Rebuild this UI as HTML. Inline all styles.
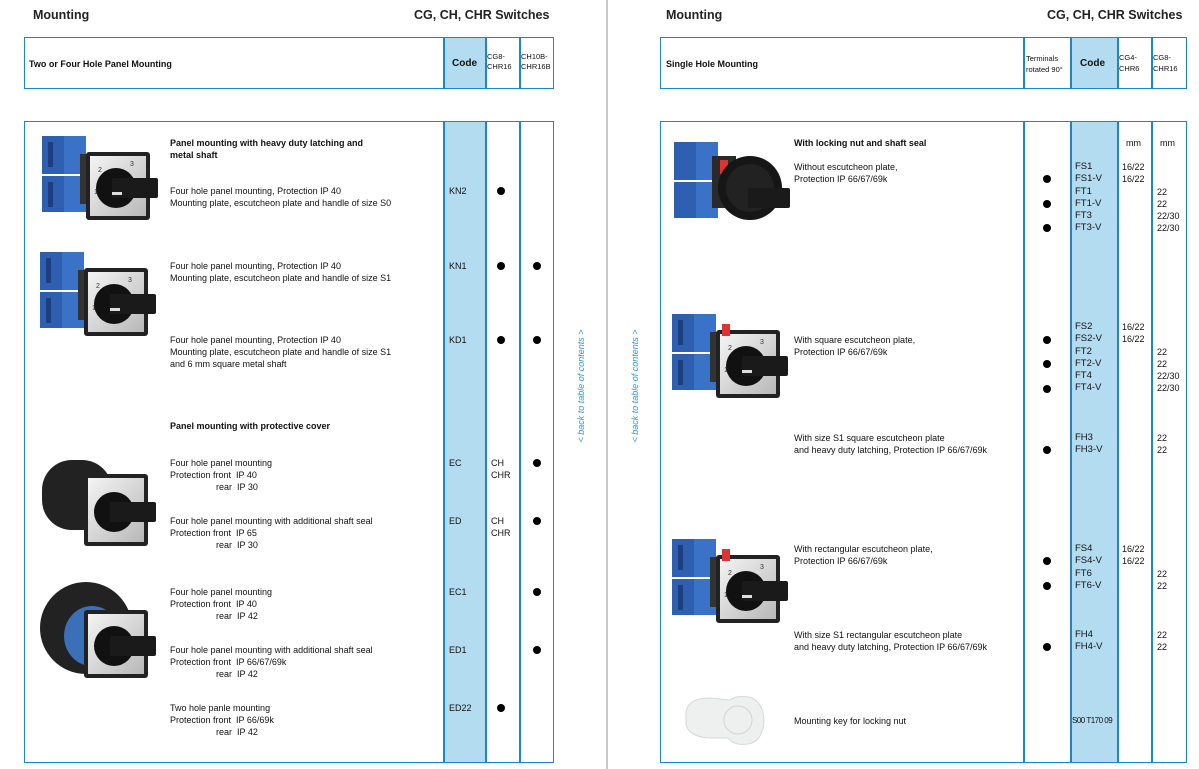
<!DOCTYPE html>
<html><head><meta charset="utf-8"><style>
*{margin:0;padding:0;box-sizing:border-box}
body{width:1199px;height:769px;background:#fff;position:relative;overflow:hidden;font-family:"Liberation Sans",Arial,sans-serif;color:#111}
.a{position:absolute;white-space:nowrap;font-size:9px;line-height:12px}
.b{font-weight:bold}
.h{position:absolute;font-size:12.5px;font-weight:bold;color:#222}
.box{position:absolute;border:1.5px solid #1a86cc}
.vl{position:absolute;width:1.5px;background:#1a86cc}
.cd{position:absolute;background:#b4dcf1}
.dot{position:absolute;width:8px;height:8px;border-radius:50%;background:#000}
.side{position:absolute;font-size:9px;font-style:italic;color:#2a9be0;white-space:nowrap;transform:rotate(-90deg);transform-origin:center;width:140px;text-align:center;line-height:12px}
svg.img{position:absolute}
</style></head><body>
<svg width="0" height="0" style="position:absolute"><defs>
<linearGradient id="pl" x1="0" y1="0" x2="1" y2="1"><stop offset="0" stop-color="#f4f4f4"/><stop offset="1" stop-color="#b8b8b8"/></linearGradient>
<g id="sw">
<rect x="2" y="4" width="22" height="38" fill="#2f5fb0"/><rect x="24" y="4" width="22" height="38" fill="#3a72c8"/>
<rect x="2" y="44" width="22" height="36" fill="#2f5fb0"/><rect x="24" y="44" width="22" height="36" fill="#3a72c8"/>
<rect x="8" y="10" width="5" height="25" fill="#1d3f80"/><rect x="8" y="50" width="5" height="25" fill="#1d3f80"/>
<rect x="40" y="22" width="16" height="50" fill="#333"/>
<rect x="46" y="20" width="64" height="68" rx="3" fill="#222"/>
<rect x="50" y="24" width="56" height="60" fill="url(#pl)"/>
<circle cx="76" cy="56" r="20" fill="#111"/>
<rect x="72" y="46" width="46" height="20" rx="2" fill="#1a1a1a"/>
<rect x="72" y="60" width="10" height="3" fill="#ddd"/>
<text x="58" y="40" font-size="7" fill="#333">2</text><text x="90" y="34" font-size="7" fill="#333">3</text><text x="54" y="62" font-size="7" fill="#333">1</text>
</g>
</defs></svg>

<div class="h" style="left:33px;top:8px">Mounting</div>
<div class="h" style="left:414px;top:8px">CG, CH, CHR Switches</div>
<div class="h" style="left:666px;top:8px">Mounting</div>
<div class="h" style="left:1047px;top:8px">CG, CH, CHR Switches</div>

<div style="position:absolute;left:606px;top:0;width:2px;height:769px;background:#c8c8c8"></div>
<div class="side" style="left:511px;top:380px">&lt; back to table of contents &gt;</div>
<div class="side" style="left:565px;top:380px">&lt; back to table of contents &gt;</div>

<!-- LEFT header -->
<div class="cd" style="left:443px;top:37px;width:42px;height:52px"></div>
<div class="box" style="left:24px;top:37px;width:530px;height:52px"></div>
<div class="vl" style="left:443px;top:37px;height:52px"></div>
<div class="vl" style="left:485px;top:37px;height:52px"></div>
<div class="vl" style="left:519px;top:37px;height:52px"></div>
<div class="a b" style="left:29px;top:58px">Two or Four Hole Panel Mounting</div>
<div class="a b" style="left:452px;top:58px;font-size:10px">Code</div>
<div class="a" style="left:487px;top:52px;font-size:7.5px;line-height:10px">CG8-<br>CHR16</div>
<div class="a" style="left:521px;top:52px;font-size:7.5px;line-height:10px">CH10B-<br>CHR16B</div>

<!-- LEFT main -->
<div class="cd" style="left:443px;top:121px;width:42px;height:642px"></div>
<div class="box" style="left:24px;top:121px;width:530px;height:642px"></div>
<div class="vl" style="left:443px;top:121px;height:642px"></div>
<div class="vl" style="left:485px;top:121px;height:642px"></div>
<div class="vl" style="left:519px;top:121px;height:642px"></div>

<svg class="img" style="left:40px;top:132px" width="120" height="90" viewBox="0 0 120 90"><use href="#sw"/></svg>
<svg class="img" style="left:38px;top:248px" width="120" height="90" viewBox="0 0 120 90"><use href="#sw"/></svg>
<svg class="img" style="left:38px;top:450px" width="122" height="98" viewBox="0 0 122 98"><rect x="4" y="10" width="70" height="70" rx="30" fill="#222"/><g transform="translate(0,8)"><rect x="46" y="16" width="64" height="72" rx="3" fill="#222"/><rect x="50" y="20" width="56" height="64" fill="url(#pl)"/><circle cx="76" cy="54" r="20" fill="#111"/><rect x="72" y="44" width="46" height="20" rx="2" fill="#1a1a1a"/></g></svg>
<svg class="img" style="left:36px;top:580px" width="124" height="100" viewBox="0 0 124 100"><ellipse cx="50" cy="48" rx="46" ry="46" fill="#222"/><ellipse cx="56" cy="56" rx="28" ry="30" fill="#3b6fb8"/><g transform="translate(2,10)"><rect x="46" y="20" width="64" height="68" rx="3" fill="#222"/><rect x="50" y="24" width="56" height="60" fill="url(#pl)"/><circle cx="76" cy="56" r="20" fill="#111"/><rect x="72" y="46" width="46" height="20" rx="2" fill="#1a1a1a"/></g></svg>

<div class="a b" style="left:170px;top:137px">Panel mounting with heavy duty latching and<br>metal shaft</div>
<div class="a" style="left:170px;top:185px">Four hole panel mounting, Protection IP 40<br>Mounting plate, escutcheon plate and handle of size S0</div>
<div class="a" style="left:449px;top:185px">KN2</div><div class="dot" style="left:497px;top:187px"></div>
<div class="a" style="left:170px;top:260px">Four hole panel mounting, Protection IP 40<br>Mounting plate, escutcheon plate and handle of size S1</div>
<div class="a" style="left:449px;top:260px">KN1</div><div class="dot" style="left:497px;top:262px"></div><div class="dot" style="left:533px;top:262px"></div>
<div class="a" style="left:170px;top:334px">Four hole panel mounting, Protection IP 40<br>Mounting plate, escutcheon plate and handle of size S1<br>and 6 mm square metal shaft</div>
<div class="a" style="left:449px;top:334px">KD1</div><div class="dot" style="left:497px;top:336px"></div><div class="dot" style="left:533px;top:336px"></div>
<div class="a b" style="left:170px;top:420px">Panel mounting with protective cover</div>
<div class="a" style="left:170px;top:457px">Four hole panel mounting<br>Protection front &nbsp;IP 40<br><span style="padding-left:46px">rear &nbsp;IP 30</span></div>
<div class="a" style="left:449px;top:457px">EC</div><div class="a" style="left:491px;top:457px">CH<br>CHR</div><div class="dot" style="left:533px;top:459px"></div>
<div class="a" style="left:170px;top:515px">Four hole panel mounting with additional shaft seal<br>Protection front &nbsp;IP 65<br><span style="padding-left:46px">rear &nbsp;IP 30</span></div>
<div class="a" style="left:449px;top:515px">ED</div><div class="a" style="left:491px;top:515px">CH<br>CHR</div><div class="dot" style="left:533px;top:517px"></div>
<div class="a" style="left:170px;top:586px">Four hole panel mounting<br>Protection front &nbsp;IP 40<br><span style="padding-left:46px">rear &nbsp;IP 42</span></div>
<div class="a" style="left:449px;top:586px">EC1</div><div class="dot" style="left:533px;top:588px"></div>
<div class="a" style="left:170px;top:644px">Four hole panel mounting with additional shaft seal<br>Protection front &nbsp;IP 66/67/69k<br><span style="padding-left:46px">rear &nbsp;IP 42</span></div>
<div class="a" style="left:449px;top:644px">ED1</div><div class="dot" style="left:533px;top:646px"></div>
<div class="a" style="left:170px;top:702px">Two hole panle mounting<br>Protection front &nbsp;IP 66/69k<br><span style="padding-left:46px">rear &nbsp;IP 42</span></div>
<div class="a" style="left:449px;top:702px">ED22</div><div class="dot" style="left:497px;top:704px"></div>

<!-- RIGHT header -->
<div class="cd" style="left:1070px;top:37px;width:47px;height:52px"></div>
<div class="box" style="left:660px;top:37px;width:527px;height:52px"></div>
<div class="vl" style="left:1023px;top:37px;height:52px"></div>
<div class="vl" style="left:1070px;top:37px;height:52px"></div>
<div class="vl" style="left:1117px;top:37px;height:52px"></div>
<div class="vl" style="left:1151px;top:37px;height:52px"></div>
<div class="a b" style="left:666px;top:58px">Single Hole Mounting</div>
<div class="a" style="left:1026px;top:53px;font-size:7.5px;line-height:11px">Terminals<br>rotated 90°</div>
<div class="a b" style="left:1080px;top:58px;font-size:10px">Code</div>
<div class="a" style="left:1119px;top:52px;font-size:7.5px;line-height:11px">CG4-<br>CHR6</div>
<div class="a" style="left:1153px;top:52px;font-size:7.5px;line-height:11px">CG8-<br>CHR16</div>

<!-- RIGHT main -->
<div class="cd" style="left:1070px;top:121px;width:47px;height:642px"></div>
<div class="box" style="left:660px;top:121px;width:527px;height:642px"></div>
<div class="vl" style="left:1023px;top:121px;height:642px"></div>
<div class="vl" style="left:1070px;top:121px;height:642px"></div>
<div class="vl" style="left:1117px;top:121px;height:642px"></div>
<div class="vl" style="left:1151px;top:121px;height:642px"></div>

<svg class="img" style="left:672px;top:138px" width="120" height="90" viewBox="0 0 120 90"><rect x="2" y="4" width="22" height="38" fill="#2f5fb0"/><rect x="24" y="4" width="22" height="38" fill="#3a72c8"/><rect x="2" y="44" width="22" height="36" fill="#2f5fb0"/><rect x="24" y="44" width="22" height="36" fill="#3a72c8"/><rect x="40" y="18" width="24" height="52" fill="#2a2a2a"/><rect x="48" y="22" width="8" height="14" fill="#d33"/><circle cx="78" cy="50" r="32" fill="#161616"/><circle cx="78" cy="50" r="24" fill="#222"/><rect x="76" y="50" width="42" height="20" rx="2" fill="#1a1a1a"/></svg>
<svg class="img" style="left:670px;top:310px" width="120" height="92" viewBox="0 0 120 92"><use href="#sw"/><rect x="52" y="14" width="8" height="12" fill="#d33"/></svg>
<svg class="img" style="left:670px;top:535px" width="120" height="92" viewBox="0 0 120 92"><use href="#sw"/><rect x="52" y="14" width="8" height="12" fill="#d33"/></svg>
<svg class="img" style="left:680px;top:690px" width="90" height="60" viewBox="0 0 90 60"><path d="M6 22 Q8 8 30 8 L50 10 Q58 4 72 8 Q84 14 84 32 Q82 52 68 54 Q54 56 48 48 L28 48 Q8 46 6 34Z" fill="#eef0f0" stroke="#d6d9d9"/><ellipse cx="58" cy="30" rx="14" ry="14" fill="none" stroke="#d0d4d4"/></svg>

<div class="a b" style="left:794px;top:137px">With locking nut and shaft seal</div>
<div class="a" style="left:1126px;top:137px">mm</div><div class="a" style="left:1160px;top:137px">mm</div>
<div class="a" style="left:794px;top:161px">Without escutcheon plate,<br>Protection IP 66/67/69k</div>
<div class="a" style="left:1075px;top:161px;line-height:12.3px;font-size:9.5px">FS1<br>FS1-V<br>FT1<br>FT1-V<br>FT3<br>FT3-V</div>
<div class="a" style="left:1122px;top:161px;line-height:12.3px">16/22<br>16/22</div>
<div class="a" style="left:1157px;top:161px;line-height:12.3px"><br><br>22<br>22<br>22/30<br>22/30</div>
<div class="dot" style="left:1043px;top:175px"></div><div class="dot" style="left:1043px;top:200px"></div><div class="dot" style="left:1043px;top:224px"></div>

<div class="a" style="left:794px;top:334px">With square escutcheon plate,<br>Protection IP 66/67/69k</div>
<div class="a" style="left:1075px;top:321px;line-height:12.3px;font-size:9.5px">FS2<br>FS2-V<br>FT2<br>FT2-V<br>FT4<br>FT4-V</div>
<div class="a" style="left:1122px;top:321px;line-height:12.3px">16/22<br>16/22</div>
<div class="a" style="left:1157px;top:321px;line-height:12.3px"><br><br>22<br>22<br>22/30<br>22/30</div>
<div class="dot" style="left:1043px;top:336px"></div><div class="dot" style="left:1043px;top:360px"></div><div class="dot" style="left:1043px;top:385px"></div>

<div class="a" style="left:794px;top:432px">With size S1 square escutcheon plate<br>and heavy duty latching, Protection IP 66/67/69k</div>
<div class="a" style="left:1075px;top:432px;font-size:9.5px">FH3<br>FH3-V</div>
<div class="a" style="left:1157px;top:432px">22<br>22</div>
<div class="dot" style="left:1043px;top:446px"></div>

<div class="a" style="left:794px;top:543px">With rectangular escutcheon plate,<br>Protection IP 66/67/69k</div>
<div class="a" style="left:1075px;top:543px;line-height:12.3px;font-size:9.5px">FS4<br>FS4-V<br>FT6<br>FT6-V</div>
<div class="a" style="left:1122px;top:543px;line-height:12.3px">16/22<br>16/22</div>
<div class="a" style="left:1157px;top:543px;line-height:12.3px"><br><br>22<br>22</div>
<div class="dot" style="left:1043px;top:557px"></div><div class="dot" style="left:1043px;top:582px"></div>

<div class="a" style="left:794px;top:629px">With size S1 rectangular escutcheon plate<br>and heavy duty latching, Protection IP 66/67/69k</div>
<div class="a" style="left:1075px;top:629px;font-size:9.5px">FH4<br>FH4-V</div>
<div class="a" style="left:1157px;top:629px">22<br>22</div>
<div class="dot" style="left:1043px;top:643px"></div>

<div class="a" style="left:794px;top:715px">Mounting key for locking nut</div>
<div class="a" style="left:1072px;top:715px;font-size:8px;letter-spacing:-0.5px">S00 T170 09</div>
</body></html>
